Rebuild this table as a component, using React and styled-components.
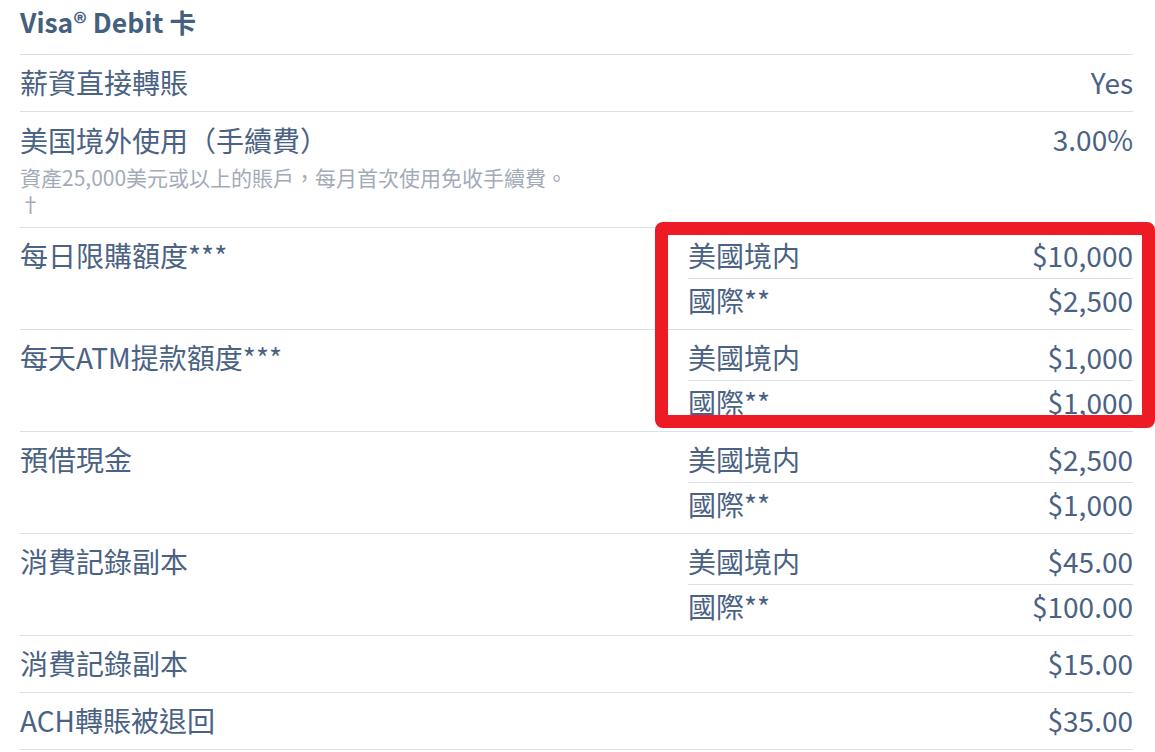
import React from "react";
import styled, { createGlobalStyle } from "styled-components";

const Global = createGlobalStyle`
  html, body { margin: 0; padding: 0; background: #ffffff; }
  body { font-family: "Noto Sans CJK TC", "Noto Sans CJK SC", sans-serif; }
`;

const TEXT = "#4a6283";
const LINE = "#d9e0ea";

const Page = styled.div`
  padding: 0 22px 0 20px;
  color: ${TEXT};
`;

const Title = styled.h2`
  margin: 0;
  padding: 4px 0 14px;
  font-size: 26.5px;
  line-height: 36px;
  font-weight: 700;
  color: #44607f;
`;

const Table = styled.div`
  border-bottom: 1px solid ${LINE};
`;

const Row = styled.div`
  display: grid;
  grid-template-columns: 1fr 445px;
  border-top: 1px solid ${LINE};
  padding: 7px 0 6px;
  font-size: 28px;
  line-height: 36px;
`;

const Label = styled.div`
  padding: ${(p) => (p.$lower ? "3px" : "2px")} 0 5px;
`;

const Note = styled.div`
  font-size: 21px;
  line-height: 26px;
  color: #a3abb9;
  margin-top: 6px;
`;

const Value = styled.div`
  padding: 2px 0 5px;
  text-align: right;
`;

const SubList = styled.div`
  display: flex;
  flex-direction: column;
`;

const SubRow = styled.div`
  display: flex;
  justify-content: space-between;
  padding: 2px 0 5px;
  & + & {
    border-top: 1px solid ${LINE};
    padding-top: 3px;
  }
`;

const Group = styled.div`
  position: relative;
`;

const Highlight = styled.div`
  position: absolute;
  top: -5px;
  bottom: 3px;
  right: -22px;
  width: 500px;
  box-sizing: border-box;
  border: 13px solid #ed1c24;
  border-radius: 8px;
  pointer-events: none;
`;

const Split = ({ rows }) => (
  <SubList>
    {rows.map(([k, v]) => (
      <SubRow key={k}>
        <span>{k}</span>
        <span>{v}</span>
      </SubRow>
    ))}
  </SubList>
);

export default function App() {
  return (
    <Page>
      <Global />
      <Title>Visa® Debit 卡</Title>
      <Table>
        <Row>
          <Label>薪資直接轉賬</Label>
          <Value>Yes</Value>
        </Row>
        <Row>
          <Label $lower>
            美国境外使用（手續費）
            <Note>
              資產25,000美元或以上的賬戶，每月首次使用免收手續費。
              <br />†
            </Note>
          </Label>
          <Value>3.00%</Value>
        </Row>
        <Group>
          <Row>
            <Label>每日限購額度***</Label>
            <Split rows={[["美國境内", "$10,000"], ["國際**", "$2,500"]]} />
          </Row>
          <Row>
            <Label>每天ATM提款額度***</Label>
            <Split rows={[["美國境内", "$1,000"], ["國際**", "$1,000"]]} />
          </Row>
          <Highlight />
        </Group>
        <Row>
          <Label>預借現金</Label>
          <Split rows={[["美國境内", "$2,500"], ["國際**", "$1,000"]]} />
        </Row>
        <Row>
          <Label>消費記錄副本</Label>
          <Split rows={[["美國境内", "$45.00"], ["國際**", "$100.00"]]} />
        </Row>
        <Row>
          <Label>消費記錄副本</Label>
          <Value>$15.00</Value>
        </Row>
        <Row>
          <Label>ACH轉賬被退回</Label>
          <Value>$35.00</Value>
        </Row>
      </Table>
    </Page>
  );
}
